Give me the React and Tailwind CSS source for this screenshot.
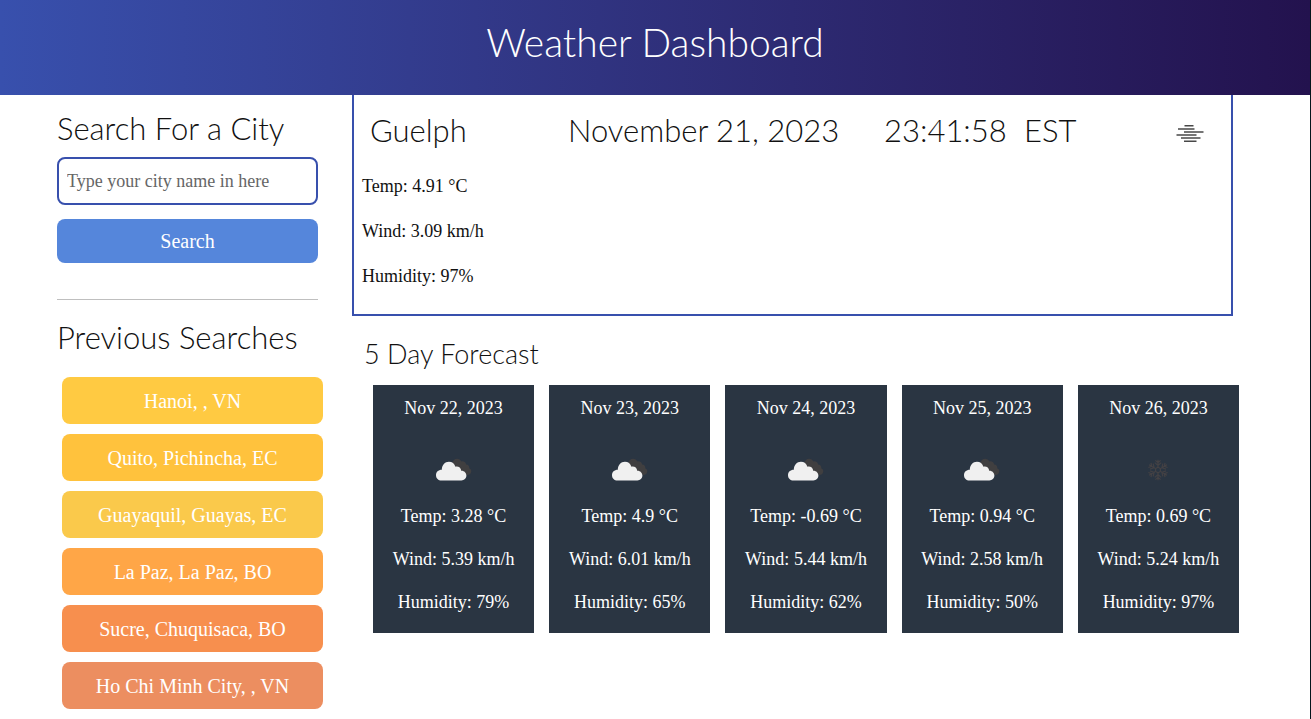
import React from "react";

const searches = [
  { name: "Hanoi, , VN", color: "bg-[#ffca42]" },
  { name: "Quito, Pichincha, EC", color: "bg-[#ffc23d]" },
  { name: "Guayaquil, Guayas, EC", color: "bg-[#fac94b]" },
  { name: "La Paz, La Paz, BO", color: "bg-[#ffa647]" },
  { name: "Sucre, Chuquisaca, BO", color: "bg-[#f78f4e]" },
  { name: "Ho Chi Minh City, , VN", color: "bg-[#ec8e60]" },
];

const forecast = [
  { date: "Nov 22, 2023", icon: "cloud", temp: "3.28", wind: "5.39", humidity: 79 },
  { date: "Nov 23, 2023", icon: "cloud", temp: "4.9", wind: "6.01", humidity: 65 },
  { date: "Nov 24, 2023", icon: "cloud", temp: "-0.69", wind: "5.44", humidity: 62 },
  { date: "Nov 25, 2023", icon: "cloud", temp: "0.94", wind: "2.58", humidity: 50 },
  { date: "Nov 26, 2023", icon: "snow", temp: "0.69", wind: "5.24", humidity: 97 },
];

function CloudIcon() {
  return (
    <svg width="36" height="24" viewBox="0 0 36 24" aria-hidden="true">
      <path
        d="M16 5.500C16.800 2.500 18.700.7 21.200.7c1.800 0 3.300 1 4 2.700 2.400-.5 4.600.8 4.900 3.100 2.300.1 3.600 1.700 3.100 3.800 1.700.7 2.300 2.200 2 3.700-.4 1.800-1.900 3-4.200 3L16 8z"
        fill="#403f40"
      />
      <path
        d="M5.500 22.500C2.400 22.500 0 20.300 0 17.200c0-3 2.300-5.400 5.800-5.400C5.900 7.200 8.900 3.800 12.900 3.800c3.200 0 5.700 2 6.500 4.900 3-.6 5.600 1.100 5.800 4 2.900-.2 5.200 2 5.200 4.900 0 2.800-2.200 4.900-5 4.900z"
        fill="#f0f0f0"
      />
    </svg>
  );
}

function SnowIcon() {
  const arms = [0, 60, 120, 180, 240, 300];
  return (
    <svg width="22" height="22" viewBox="-11 -11 22 22" fill="none" stroke="#434144" strokeWidth="1.200" aria-hidden="true">
      {arms.map((a) => (
        <path key={a} transform={`rotate(${a})`} d="M0-2.500V-10.300M-2.600-9.600 0-7.300 2.600-9.600M-3.200-7.400 0-4.600 3.200-7.400" />
      ))}
      <path d="M0-2.800 2.400-1.400V1.400L0 2.800-2.400 1.400V-1.400Z" />
    </svg>
  );
}

function MistIcon() {
  return (
    <svg className="mt-2" width="28" height="20" viewBox="0 0 28 20" stroke="#484848" strokeWidth="1.500" aria-hidden="true">
      <path d="M8.500 1.800H17.500M2 4.900H18.500M8 8H27.500M.5 11H20.500M5 14.100H24.500M8 17.200H20.500" />
    </svg>
  );
}

export default function App() {
  return (
    <div className="min-h-screen border-r border-[#03151c] bg-white font-['Liberation_Serif',serif] text-lg text-[#111]">
      <header className="flex h-[95px] items-center justify-center bg-linear-to-r from-[#3850ad] to-[#23124e] pb-2.5">
        <h1 className="font-['Lato',sans-serif] text-[39px] leading-none font-light text-white">Weather Dashboard</h1>
      </header>

      <div className="flex">
        <aside className="ml-[57px] w-[261px] shrink-0 pt-3">
          <form onSubmit={(e) => e.preventDefault()}>
            <label htmlFor="city" className="block font-['Lato',sans-serif] text-[31px] leading-[42px] font-light">
              Search For a City
            </label>
            <input
              id="city"
              type="text"
              placeholder="Type your city name in here"
              className="mt-2 block h-12 w-full rounded-lg border-2 border-[#3850ad] px-2 placeholder:text-[#666]"
            />
            <button type="submit" className="mt-3.5 block h-11 w-full rounded-lg bg-[#5586db] text-xl text-white">
              Search
            </button>
          </form>
          <hr className="mt-9 border-[#bfbfbf]" />
          <h2 className="mt-4 font-['Lato',sans-serif] text-[31px] leading-[42px] font-light">Previous Searches</h2>
          <div className="mt-[19px] ml-[5px] flex w-full flex-col gap-2.5">
            {searches.map((s) => (
              <button key={s.name} type="button" className={`h-[47px] rounded-lg text-xl text-white ${s.color}`}>
                {s.name}
              </button>
            ))}
          </div>
        </aside>

        <main className="mr-[71px] ml-[34px] min-w-0 flex-1">
          <section className="mr-1.5 h-[221px] border-2 border-t-0 border-[#3850ad] px-2 pt-3.5">
            <div className="grid grid-cols-[198px_316px_140px_1fr_auto] items-center pr-[19px] pl-2 font-['Lato',sans-serif] text-[31px] leading-[42px] font-light">
              <h2>Guelph</h2>
              <span>November 21, 2023</span>
              <span>23:41:58</span>
              <span>EST</span>
              <MistIcon />
            </div>
            <div className="mt-5 flex flex-col gap-[15px] leading-[30px]">
              <p>Temp: 4.91 °C</p>
              <p>Wind: 3.09 km/h</p>
              <p>Humidity: 97%</p>
            </div>
          </section>

          <h3 className="mt-5 ml-3 font-['Lato',sans-serif] text-[27px] leading-9 font-light">5 Day Forecast</h3>
          <div className="mt-[13px] ml-[21px] grid grid-cols-5 gap-[15px]">
            {forecast.map((d) => (
              <article key={d.date} className="flex h-[248px] flex-col items-center bg-[#2a3542] pt-2 leading-[30px] text-white">
                <h4>{d.date}</h4>
                <div className="mt-5 flex h-[54px] items-center">{d.icon === "cloud" ? <CloudIcon /> : <SnowIcon />}</div>
                <div className="mt-1 flex flex-col items-center gap-[13px]">
                  <p>Temp: {d.temp} °C</p>
                  <p>Wind: {d.wind} km/h</p>
                  <p>Humidity: {d.humidity}%</p>
                </div>
              </article>
            ))}
          </div>
        </main>
      </div>
    </div>
  );
}
